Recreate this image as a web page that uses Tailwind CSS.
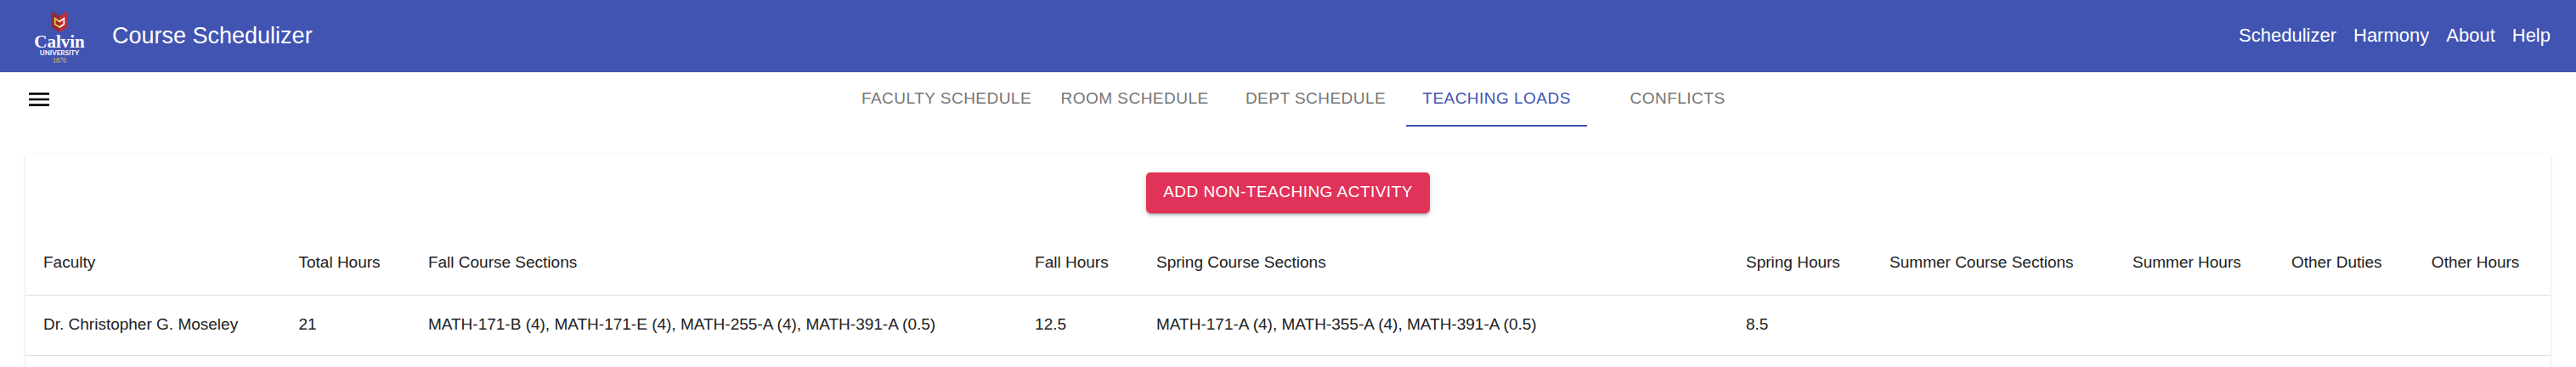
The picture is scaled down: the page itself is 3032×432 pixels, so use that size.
<!DOCTYPE html>
<html lang="en">
<head>
<meta charset="utf-8">
<meta name="viewport" content="width=device-width, initial-scale=1">
<title>Course Schedulizer</title>
<script src="https://cdn.jsdelivr.net/npm/@tailwindcss/browser@4"></script>
</head>
<body class="flex min-h-screen flex-col bg-white font-['Liberation_Sans',Arial,sans-serif] text-[19px] leading-[27px] text-[#212121]">
  <header class="flex h-[85px] items-center bg-[#4154b1] pr-[30px] pl-10 text-white">
    <svg class="h-[70px] w-[60px] shrink-0 overflow-visible" viewBox="0 -4 60 70" role="img" aria-label="Calvin University 1876">
      <path d="M20.500 1 L30 7 V26 L20.500 20 Z" fill="#8f2b3d"/>
      <path d="M39.500 1 L30 7 V26 L39.500 20 Z" fill="#bf2e38"/>
      <path d="M30 20 L24.700 16.500 V9.500 L30 13.500" fill="none" stroke="#f3cd3c" stroke-width="1.600"/>
      <path d="M30 20 L35.300 16.500 V9.500 L30 13.500" fill="none" stroke="#fff" stroke-width="1.600"/>
      <text x="30" y="44" text-anchor="middle" font-family="Liberation Serif, serif" font-weight="700" font-size="21" fill="#fff">Calvin</text>
      <text x="30" y="53" text-anchor="middle" font-family="Lato, sans-serif" font-weight="700" font-size="8" fill="#fff">UNIVERSITY</text>
      <text x="30" y="62" text-anchor="middle" font-family="Liberation Serif, serif" font-size="8" fill="#e6cb52">1876</text>
    </svg>
    <h1 class="ml-8 grow pb-0.5 text-[27px] leading-9">Course Schedulizer</h1>
    <nav class="flex gap-5 pb-0.5 text-[22px] leading-8">
      <a href="#schedulizer">Schedulizer</a>
      <a href="#harmony">Harmony</a>
      <a href="#about">About</a>
      <a href="#help">Help</a>
    </nav>
  </header>

  <div class="flex items-center px-[30px]">
    <button type="button" aria-label="Open menu" class="-ml-4 flex size-16 items-center justify-center text-black">
      <svg class="size-8" viewBox="0 0 24 24" fill="currentColor" aria-hidden="true"><path d="M3 18h18v-2H3v2zm0-5h18v-2H3v2zm0-7v2h18V6H3z"/></svg>
    </button>
    <div role="tablist" class="flex grow justify-center tracking-wide text-[#757575]">
      <button role="tab" aria-selected="false" type="button" class="h-16 min-w-[213px] px-[15px] pb-1">FACULTY SCHEDULE</button>
      <button role="tab" aria-selected="false" type="button" class="h-16 min-w-[213px] px-[15px] pb-1">ROOM SCHEDULE</button>
      <button role="tab" aria-selected="false" type="button" class="h-16 min-w-[213px] px-[15px] pb-1">DEPT SCHEDULE</button>
      <button role="tab" aria-selected="true" type="button" class="h-16 min-w-[213px] border-b-2 border-[#4154b1] px-[15px] pb-0.5 text-[#4154b1]">TEACHING LOADS</button>
      <button role="tab" aria-selected="false" type="button" class="h-16 min-w-[213px] px-[15px] pb-1">CONFLICTS</button>
    </div>
  </div>

  <main class="mt-8 flex grow flex-col px-[30px]">
    <section class="grow rounded-t-[5px] bg-white shadow-[0_3px_1px_-1px_rgba(0,0,0,0.2),0_1px_1px_0_rgba(0,0,0,0.14),0_1px_4px_0_rgba(0,0,0,0.12)]">
      <div class="flex justify-center pt-[22px]">
        <button type="button" class="h-12 rounded-[5px] bg-[#e13359] px-5 pb-1 tracking-wide text-white shadow-[0_4px_1px_-3px_rgba(0,0,0,0.2),0_3px_3px_0_rgba(0,0,0,0.14),0_1px_7px_0_rgba(0,0,0,0.12)]">ADD NON-TEACHING ACTIVITY</button>
      </div>
      <table class="mt-[22px] w-full table-fixed border-collapse text-left">
        <colgroup>
          <col class="w-[10.11%]"><col class="w-[5.13%]"><col class="w-[24.03%]"><col class="w-[4.81%]"><col class="w-[23.35%]"><col class="w-[5.69%]"><col class="w-[9.62%]"><col class="w-[6.29%]"><col class="w-[5.55%]"><col class="w-[5.42%]">
        </colgroup>
        <thead>
          <tr class="h-[74px] border-b border-[#e0e0e0] whitespace-nowrap">
            <th scope="col" class="pb-0.5 pl-[21px] font-normal">Faculty</th>
            <th scope="col" class="pb-0.5 pl-[21px] font-normal">Total Hours</th>
            <th scope="col" class="pb-0.5 pl-[21px] font-normal">Fall Course Sections</th>
            <th scope="col" class="pb-0.5 pl-[21px] font-normal">Fall Hours</th>
            <th scope="col" class="pb-0.5 pl-[21px] font-normal">Spring Course Sections</th>
            <th scope="col" class="pb-0.5 pl-[21px] font-normal">Spring Hours</th>
            <th scope="col" class="pb-0.5 pl-[21px] font-normal">Summer Course Sections</th>
            <th scope="col" class="pb-0.5 pl-[21px] font-normal">Summer Hours</th>
            <th scope="col" class="pb-0.5 pl-[21px] font-normal">Other Duties</th>
            <th scope="col" class="pb-0.5 pl-[21px] font-normal">Other Hours</th>
          </tr>
        </thead>
        <tbody>
          <tr class="h-[71px] border-b border-[#e0e0e0]">
            <td class="pb-0.5 pl-[21px]">Dr. Christopher G. Moseley</td>
            <td class="pb-0.5 pl-[21px]">21</td>
            <td class="pb-0.5 pl-[21px]">MATH-171-B (4), MATH-171-E (4), MATH-255-A (4), MATH-391-A (0.5)</td>
            <td class="pb-0.5 pl-[21px]">12.5</td>
            <td class="pb-0.5 pl-[21px]">MATH-171-A (4), MATH-355-A (4), MATH-391-A (0.5)</td>
            <td class="pb-0.5 pl-[21px]">8.5</td>
            <td class="pb-0.5 pl-[21px]"></td>
            <td class="pb-0.5 pl-[21px]"></td>
            <td class="pb-0.5 pl-[21px]"></td>
            <td class="pb-0.5 pl-[21px]"></td>
          </tr>
        </tbody>
      </table>
    </section>
  </main>
</body>
</html>
